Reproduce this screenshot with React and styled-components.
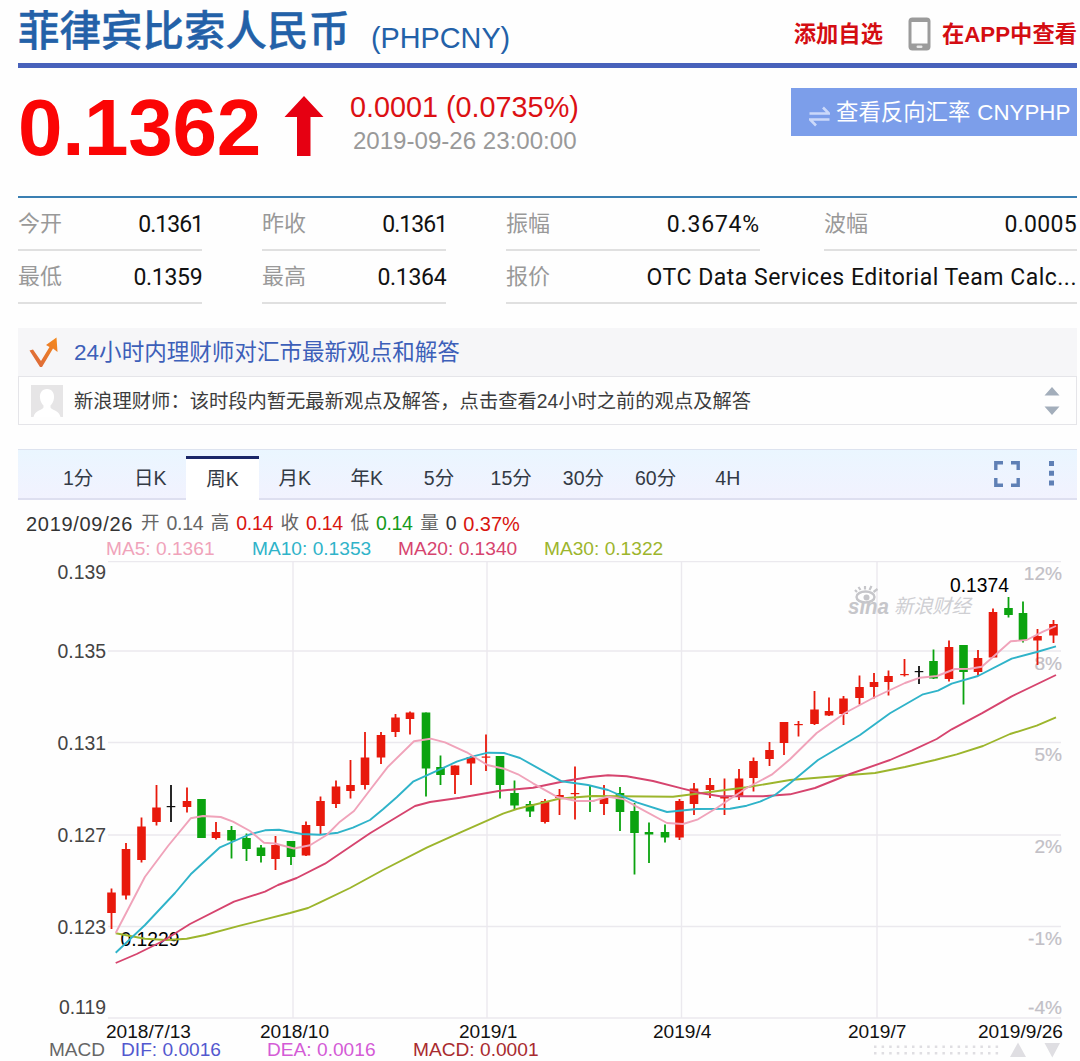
import React, { useState } from 'react';
import styled, { createGlobalStyle } from 'styled-components';


const RED = '#e8190c';
const GREEN = '#0ba30f';
const BLACK = '#111';

// x, high, low, body top, body bottom, colour
const candles = [
    [111.5, 888.5, 929, 892.5, 913, RED],
    [126, 843, 899.5, 849, 895.5, RED],
    [141.5, 817.5, 862.5, 826.5, 860, RED],
    [156.5, 785, 825.5, 807.5, 822, RED],
    [171, 785, 822, 806, 807, BLACK],
    [187, 787.5, 812.5, 801, 807, RED],
    [201.5, 799, 838, 799, 838, GREEN],
    [216, 822, 839.5, 832, 838, RED],
    [231.5, 826, 858.5, 830, 840.5, GREEN],
    [246.5, 833.5, 861, 838, 849, GREEN],
    [261, 845, 862.5, 847.5, 856, GREEN],
    [275.5, 836, 870, 845, 859, RED],
    [291, 841, 865, 841, 857, GREEN],
    [306, 821.5, 856, 825, 855.5, RED],
    [320.5, 796.5, 834, 801, 826, RED],
    [336, 780.5, 808, 786.5, 804, RED],
    [350.5, 760, 798.5, 785, 791, RED],
    [365, 732, 789.5, 757.5, 785, RED],
    [381, 732, 764, 735, 757.5, RED],
    [395.5, 714, 737, 717.5, 732, RED],
    [410, 711.5, 734.5, 712.5, 719, RED],
    [426, 712.5, 796.5, 712.5, 768.5, GREEN],
    [440.5, 755.5, 785, 767, 775, GREEN],
    [455, 765.5, 794, 765.5, 775, RED],
    [471, 756, 785, 757, 763.5, RED],
    [486, 734.5, 771, 756.5, 757.5, RED],
    [500, 756, 798.5, 756, 785, GREEN],
    [514.5, 780.5, 809.5, 793, 805.5, GREEN],
    [530, 801, 817, 804, 811.5, GREEN],
    [545, 799, 823.5, 801, 822, RED],
    [559.5, 789, 815, 795, 798, RED],
    [575, 766.5, 819.5, 793, 794, RED],
    [590, 785, 812, 800.5, 801.5, GREEN],
    [604, 785, 815, 798, 804, RED],
    [620, 787, 831, 793, 812, GREEN],
    [634.5, 803, 874.5, 811, 833, GREEN],
    [649, 822.5, 863, 832, 834.5, GREEN],
    [665, 824.5, 842.5, 832, 837.5, GREEN],
    [679.5, 799, 840, 801, 837.5, RED],
    [694, 783, 815, 788.5, 804, RED],
    [710, 778, 798, 785, 790, RED],
    [724.5, 778.5, 815, 797, 798.5, RED],
    [739, 769, 800, 778.5, 797, RED],
    [753.5, 757.5, 791.5, 761, 778, RED],
    [769.5, 742, 766, 750, 759, RED],
    [784, 722, 755, 722, 743, RED],
    [798.5, 721, 736.5, 724, 725, RED],
    [814.5, 691, 725, 709.5, 724, RED],
    [829, 697.5, 716, 711, 715.5, RED],
    [843.5, 696, 725, 698.5, 714, RED],
    [859.5, 675.5, 704.5, 687, 698, RED],
    [874, 673, 698.5, 682, 687, RED],
    [888.5, 670.5, 695.5, 676, 682, RED],
    [904.5, 659, 676.5, 674, 675, RED],
    [919, 666, 684, 671, 672, BLACK],
    [933.5, 649.5, 679, 661, 678.5, GREEN],
    [949, 640.5, 681.5, 647, 679, RED],
    [963.5, 645, 704.5, 645, 672, GREEN],
    [978, 650, 675.5, 658, 672, RED],
    [993, 608.5, 658, 612, 657.5, RED],
    [1008.5, 597, 617.5, 608, 615, GREEN],
    [1023, 601.5, 642.5, 613, 640, GREEN],
    [1037.5, 629, 665, 636, 640.5, RED],
    [1053.5, 620, 643, 624, 635.5, RED],
];

const averages = [
    {
        name: 'MA30: 0.1322', color: '#9cb52c',
        points: '115.7,933.3 145,938.7 166.7,940 186.7,938.7 205,935 240,925.7 290,913 308,908 320,902.3 350,888 383,870 426.7,847.7 460,832.7 503,813.7 516.7,809 533,805 560,798.5 593,796 673,796.7 710,792 746.7,787.3 790,780 850,775 875,773 905,767 935,760 956.7,754.3 983,746 1010,734 1036.7,725.7 1056,717.3',
    },
    {
        name: 'MA20: 0.1340', color: '#d6446e',
        points: '115.7,963 136.7,954 163,941 190,924 234,901.7 265,891.7 278,885 296.7,878 325,863.7 370,833.3 415,806 430,802 460,797.7 500,790.7 533,787.7 566.7,780.7 590,777 608,775.3 626.7,776.3 653,781 681.7,788.3 700,793 720,796.3 763,796.3 790,794.3 815,788 850,774 890,760 911.7,750.7 936.7,739 951.7,729.3 981.7,713.3 1011.7,696.3 1056,675',
    },
    {
        name: 'MA10: 0.1353', color: '#2fb3c9',
        points: '115.7,952.7 145,925 175,893 190.7,874.3 220,847.3 248,835 265,830.3 279,829.7 301.7,834 320,834.7 338,832.7 353,827.7 370,820 383,809.3 396.7,797.3 413,781.7 440,769.3 456.7,761.7 473,756.3 488,752.7 504,753 520,758 561.7,781.3 588,785 608,790 636.7,802.3 667,812 696.7,809 730,808.7 746.7,805.7 760,801.7 775,795 790,783.3 818,760 860,735 890,713.3 923,694.3 938,690.7 951.7,683.7 978,676 1011.7,658.7 1036.7,652 1056,646.3',
    },
    {
        name: 'MA5: 0.1361', color: '#f0a3ba',
        points: '115.7,933 145,876.7 168,846 190.7,818.3 203,816 220.7,817 233,821.7 250,831 264,842.7 275,843.5 294,848.5 310,845.3 326.7,835 340,821.7 354,811 370,790 388,766.7 414,741.3 430.7,738.7 445,742.3 466.7,752.3 487.3,765 504,768.7 518,774.3 533,783.3 558,797.3 576.7,801 593,801 608,796.7 623,799 636.7,806.7 667,823 683,824 698,819.3 716.7,808 730,799 746.7,788 771.7,774.7 790,759.3 816.7,733 845,713 873,698 905,683 920,677.7 937,676 955,669 970,668.7 981.7,666.7 993,657 1010.7,641.3 1026.7,640 1043,631.7 1056,626',
    },
];

const legend = [...averages].reverse();
const gridY = [561.5, 651, 742.5, 835, 926.5, 1018];
const gridX = [293, 487, 681.5, 877];
const prices = [['0.139', 573], ['0.135', 652], ['0.131', 744], ['0.127', 836], ['0.123', 928], ['0.119', 1008]];
const percents = [['12%', 574], ['8%', 664], ['5%', 755], ['2%', 847], ['-1%', 939], ['-4%', 1008]];
const dates = [['2018/7/13', 106], ['2018/10', 260], ['2019/1', 459], ['2019/4', 653], ['2019/7', 848], ['2019/9/26', 978]];
const tabs = ['1分', '日K', '周K', '月K', '年K', '5分', '15分', '30分', '60分', '4H'];
const quote = [['开', '0.14', '#666'], ['高', '0.14', '#d9150f'], ['收', '0.14', '#d9150f'], ['低', '0.14', '#159a1c'], ['量', '0', '#333']];


const Candle = ({ data }) => {
    const [x, high, low, top, bottom, color] = data;
    return (
        <g fill={color}>
            <rect x={x - 0.9} y={high} width="1.8" height={low - high} />
            <rect x={x - 4.3} y={top} width="8.6" height={Math.max(bottom - top, 1.2)} />
        </g>
    )
}

const Watermark = () => (
    <g fill="#c6c6ca">
        <text x="848" y="613.5" fontSize="22" fontWeight="700" fontStyle="italic" textLength="41" lengthAdjust="spacingAndGlyphs">sına</text>
        <ellipse cx="865.5" cy="597" rx="9" ry="5.5" fill="#fefefe" stroke="#c6c6ca" strokeWidth="2.4" />
        <circle cx="866.5" cy="597.5" r="3" />
        <path d="M857 592l-2-2M860.500 590l-2-3M865 589.500v-3.500M869.500 590l2-4M873.500 592l4-3" stroke="#c6c6ca" strokeWidth="2.2" fill="none" />
        <text x="894" y="612.5" fontSize="19.5" fontStyle="italic" textLength="77" fill="#cfcfd3">新浪财经</text>
    </g>
)

const Chart = () => (
    <ChartSvg viewBox="0 561 1080 480">
        <g stroke="#ebe9ee" strokeWidth="1.4">
            {gridY.map((y) => <line key={y} x1="108" x2="1061" y1={y} y2={y} />)}
            {gridX.map((x) => <line key={x} x1={x} x2={x} y1="561" y2="1018" />)}
        </g>
        <Watermark />
        <g fill="#444" fontSize="19.4" textAnchor="end">
            {prices.map(([label, y]) => <text key={label} x="106" y={y + 6}>{label}</text>)}
        </g>
        <g fill="#c2c0c6" stroke="#c2c0c6" strokeWidth="0.2" textAnchor="end">
            {percents.map(([label, y]) => <text key={label} x="1062" y={y + 5.7}>{label}</text>)}
        </g>
        <g fill="#111">
            {dates.map(([label, x]) => <text key={label} x={x} y="1038.3">{label}</text>)}
        </g>
        {candles.map((c) => <Candle key={c[0]} data={c} />)}
        <g fill="#000" fontSize="19.3">
            <text x="120.5" y="946.3">0.1229</text>
            <text x="950" y="591.8">0.1374</text>
        </g>
        {averages.map((a) => (
            <polyline key={a.name} points={a.points} fill="none" stroke={a.color} strokeWidth="1.9" strokeLinejoin="round" />
        ))}
    </ChartSvg>
)

const App = () => {

    const [active, setActive] = useState('周K');

    return (
        <Page>
            <GlobalStyle />
            <Header>
                <Title>菲律宾比索人民币</Title>
                <Code>(PHPCNY)</Code>
                <HeaderLinks>
                    <a>添加自选</a>
                    <svg width="23" height="34" viewBox="0 0 23 34">
                        <rect x="0.5" y="0.5" width="22" height="33" rx="4" fill="#9b9b9b" />
                        <rect x="3.5" y="5" width="16" height="21.5" fill="#fdfdfd" />
                        <rect x="8.5" y="28.5" width="6" height="2.4" rx="1.2" fill="#e8e8e8" />
                    </svg>
                    <a>在APP中查看</a>
                </HeaderLinks>
            </Header>

            <PriceRow>
                <Price>0.1362</Price>
                <UpArrow width="40" height="60" viewBox="0 0 40 60">
                    <path d="M20 0L39.5 21H26.5V60H13V21H0.5z" fill="#e60012" />
                </UpArrow>
                <Change>
                    <strong>0.0001 (0.0735%)</strong>
                    <span>2019-09-26 23:00:00</span>
                </Change>
                <ReverseButton>
                    <svg width="21" height="21" viewBox="0 0 21 21" fill="none" stroke="#cbd9fa" strokeWidth="2.6">
                        <path d="M0.5 7.500H20L14 1.500M20.500 13.500H1L7 19.500" />
                    </svg>
                    <span>查看反向汇率</span>
                    <em>CNYPHP</em>
                </ReverseButton>
            </PriceRow>

            <Stats>
                <Stat><span>今开</span><Value $spacing="-1px">0.1361</Value></Stat>
                <Stat><span>昨收</span><Value $spacing="-1px">0.1361</Value></Stat>
                <Stat $inset="4px"><span>振幅</span><Value $spacing="0.8px">0.3674%</Value></Stat>
                <Stat><span>波幅</span><Value $spacing="0.3px">0.0005</Value></Stat>
                <Stat><span>最低</span><Value $spacing="-0.3px">0.1359</Value></Stat>
                <Stat><span>最高</span><Value $spacing="-0.3px">0.1364</Value></Stat>
                <Stat $span={2}><span>报价</span><Value $spacing="0.5px">OTC Data Services Editorial Team Calc...</Value></Stat>
            </Stats>

            <Advice>
                <AdviceHead>
                    <svg width="30" height="30" viewBox="0 0 30 30">
                        <defs>
                            <linearGradient id="tick" x1="0" y1="1" x2="1" y2="0">
                                <stop offset="0" stopColor="#d9653f" />
                                <stop offset="1" stopColor="#f58a1d" />
                            </linearGradient>
                        </defs>
                        <path d="M0.500 13.500L4 12.500L12 24L20.500 10L17 8L27.500 0.500L28.500 15L24 11.500L13 30H11z" fill="url(#tick)" />
                    </svg>
                    <span>24小时内理财师对汇市最新观点和解答</span>
                </AdviceHead>
                <AdviceBody>
                    <svg width="32" height="32" viewBox="0 0 32 32">
                        <rect width="32" height="32" fill="#e6e5e6" />
                        <path d="M16 4c-5 0-7.500 4-7 9 .3 3.500 2 6 3.500 7.500v2C11 25.500 4 25 2.500 32h27C28 25 21 25.500 19.500 22.500v-2C21 19 22.700 16.500 23 13c.5-5-2-9-7-9z" fill="#fff" />
                    </svg>
                    <span>新浪理财师：该时段内暂无最新观点及解答，点击查看24小时之前的观点及解答</span>
                    <Spinner width="16" height="28" viewBox="0 0 16 28" fill="#a3aebb">
                        <path d="M8 0L15.500 8.500H0.500zM8 28L15.500 19.500H0.500z" />
                    </Spinner>
                </AdviceBody>
            </Advice>

            <TabBar>
                {tabs.map((t) => (
                    <Tab key={t} $active={t === active} onClick={() => setActive(t)}>{t}</Tab>
                ))}
                <Tools width="62" height="26" viewBox="0 0 62 26">
                    <path d="M1.800 9V1.800H9M17 1.800H24.200V9M24.200 17V24.200H17M9 24.200H1.800V17" fill="none" stroke="#5f80b5" strokeWidth="3.400" />
                    <path d="M55 0h5v5h-5zM55 9.700h5v5h-5zM55 19.400h5v5h-5z" fill="#5f80b5" />
                </Tools>
            </TabBar>

            <QuoteLine>
                <time>2019/09/26</time>
                {quote.map(([label, value, color]) => (
                    <Quote key={label} $color={color} $short={value === '0'}>
                        <span>{label}</span>
                        <b>{value}</b>
                    </Quote>
                ))}
                <Percent>0.37%</Percent>
            </QuoteLine>
            <Legend>
                {legend.map((a) => <LegendItem key={a.name} $color={a.color}>{a.name}</LegendItem>)}
            </Legend>

            <Chart />

            <MacdRow>
                <MacdName>MACD</MacdName>
                <LegendItem $color="#5358cf">DIF: 0.0016</LegendItem>
                <LegendItem $color="#d45bd6">DEA: 0.0016</LegendItem>
                <LegendItem $color="#a92b2e">MACD: 0.0001</LegendItem>
                <Handles width="188" height="16" viewBox="0 0 188 16" fill="#dfdee2">
                    {Array.from({ length: 17 }, (_, i) => (
                        <path key={i} d={`M${1 + i * 7.6} 3.500h2.500v2.500h-2.500zM${1 + i * 7.6} 10h2.500v2.500h-2.500z`} />
                    ))}
                    <path d="M145 0.500L153 15H137zM171.500 1H187L179.300 15.500z" />
                </Handles>
            </MacdRow>
        </Page>
    )
}

export default App;

const GlobalStyle = createGlobalStyle`
    body{
        margin: 0;
        background-color: #fefefe;
        font-family: 'Liberation Sans', 'Noto Sans CJK SC', sans-serif;
        overflow: hidden;
    }
`

const Page = styled.div`
    width: 1080px;
    height: 1061px;
    box-sizing: border-box;
    overflow: hidden;
    display: flex;
    flex-direction: column;
    line-height: 1;

    svg{
        flex-shrink: 0;
    }
`

const Header = styled.header`
    display: flex;
    align-items: flex-start;
    height: 63px;
    margin: 0 3px 0 18px;
    border-bottom: 5px solid #4862bb;
`

const Title = styled.h1`
    margin: 7px 0 0;
    font-size: 41.5px;
    line-height: 42px;
    font-weight: 500;
    font-family: 'Noto Sans CJK SC', sans-serif;
    -webkit-text-stroke: 0.4px #2361a8;
    color: #2361a8;
`

const Code = styled.span`
    margin: 23px 0 0 21px;
    font-size: 28.8px;
    line-height: 30px;
    color: #2361a8;
`

const HeaderLinks = styled.div`
    display: flex;
    align-items: center;
    margin: 17px 0 0 auto;
    height: 34px;
    font-size: 22.3px;
    font-weight: 700;
    color: #d40d12;

    a{
        padding-top: 2px;
    }

    svg{
        margin: 0 11px 0 25px;
    }
`

const PriceRow = styled.section`
    display: flex;
    align-items: flex-start;
    height: 128px;
    margin: 0 3px 0 18px;
    border-bottom: 2px solid #3a7fb2;
`

const Price = styled.div`
    margin-top: 20px;
    font-size: 80px;
    line-height: 80px;
    font-weight: 700;
    letter-spacing: -0.3px;
    color: #fb0505;
`

const UpArrow = styled.svg`
    margin: 28px 0 0 23px;
`

const Change = styled.div`
    display: flex;
    flex-direction: column;
    margin: 24px 0 0 26px;

    strong{
        font-size: 28.8px;
        line-height: 30px;
        font-weight: 400;
        color: #dc1013;
    }

    span{
        margin: 5px 0 0 3px;
        font-size: 24.1px;
        line-height: 28px;
        color: #999;
    }
`

const ReverseButton = styled.button`
    display: flex;
    align-items: center;
    width: 286px;
    height: 48px;
    margin: 20px 0 0 auto;
    padding: 2px 0 0 18px;
    border: none;
    background-color: #7c9eea;
    color: #fff;
    font: 22.4px/1 'Liberation Sans', 'Noto Sans CJK SC', sans-serif;

    svg{
        margin: 7px 6px 0 0;
    }

    em{
        margin-left: 7px;
        font-size: 22.3px;
        font-style: normal;
    }
`

const Stats = styled.section`
    display: grid;
    grid-template-columns: 184px 184px 258px 253px;
    column-gap: 60px;
    margin: 0 3px 0 18px;
`

const Stat = styled.div`
    display: flex;
    align-items: center;
    justify-content: space-between;
    box-sizing: border-box;
    height: 53px;
    margin-right: ${({ $inset }) => $inset || 0};
    padding-top: 1px;
    border-bottom: 2px solid #e0e0e0;
    grid-column: span ${({ $span }) => $span || 1};

    span{
        font-size: 22px;
        color: #999;
    }
`

const Value = styled.b`
    margin-right: ${({ $spacing }) => ($spacing[0] === '-' ? $spacing : 0)};
    font-family: Roboto, sans-serif;
    font-size: 23px;
    font-weight: 400;
    letter-spacing: ${({ $spacing }) => $spacing};
    color: #111;
`

const Advice = styled.section`
    margin: 24px 3px 0 18px;
`

const AdviceHead = styled.div`
    display: flex;
    align-items: center;
    height: 48px;
    padding-left: 11px;
    background-color: #f6f6f8;
    font-size: 22.55px;
    color: #3d5fb9;

    svg{
        margin-right: 15px;
    }

    span{
        padding-top: 2px;
    }
`

const AdviceBody = styled.div`
    display: flex;
    align-items: center;
    box-sizing: border-box;
    height: 49px;
    padding: 0 16px 0 12px;
    border: 1px solid #e5e5e9;
    font-size: 19.3px;
    color: #3c3c3c;

    span{
        margin-left: 11px;
        padding-top: 2px;
        white-space: nowrap;
    }
`

const Spinner = styled.svg`
    margin-left: auto;
`

const TabBar = styled.nav`
    display: flex;
    align-items: flex-end;
    box-sizing: border-box;
    height: 51px;
    margin: 24px 3px 0 18px;
    padding-left: 24px;
    border-top: 1.5px solid #dde3ef;
    box-shadow: inset 0 -2px 0 #dedff0;
    background: linear-gradient(#eaf6ff, #f2f2fe);
`

const Tab = styled.div`
    display: flex;
    align-items: center;
    justify-content: center;
    box-sizing: border-box;
    width: 72.2px;
    height: 44px;
    padding-bottom: ${({ $active }) => ($active ? '0' : '1px')};
    border-top: 3px solid ${({ $active }) => ($active ? '#1a2768' : 'transparent')};
    background-color: ${({ $active }) => ($active ? '#fff' : 'transparent')};
    font-size: 19.5px;
    color: #333a45;
    cursor: pointer;
`

const Tools = styled.svg`
    align-self: flex-start;
    margin: 11px 21px 0 auto;
`

const QuoteLine = styled.div`
    display: flex;
    align-items: center;
    height: 44px;
    padding: 3px 0 0 26px;
    box-sizing: border-box;
    font-size: 19.5px;

    time{
        width: 115px;
        font-size: 20px;
        letter-spacing: 0.7px;
        color: #333;
    }
`

const Quote = styled.div`
    display: flex;
    align-items: center;
    width: ${({ $short }) => ($short ? '43px' : '69.8px')};

    span{
        width: 25.5px;
        font-size: 18.5px;
        color: #666;
    }

    b{
        font-weight: 400;
        letter-spacing: -0.3px;
        color: ${({ $color }) => $color};
    }
`

const Percent = styled.span`
    font-size: 20px;
    color: #d9150f;
`

const Legend = styled.div`
    display: flex;
    height: 17px;
    padding-left: 106px;
    margin-top: -5px;
    margin-bottom: 5px;
`

const LegendItem = styled.span`
    width: 146px;
    font-size: 19.15px;
    line-height: 19px;
    color: ${({ $color }) => $color};
`

const ChartSvg = styled.svg`
    width: 1080px;
    height: 480px;
    font-size: 19.1px;
`

const MacdRow = styled.div`
    display: flex;
    height: 20px;
    margin-top: -1px;
    padding-left: 49px;
`

const MacdName = styled.span`
    width: 72px;
    font-size: 19px;
    line-height: 19px;
    color: #666;
`

const Handles = styled.svg`
    margin: 2px 19px 0 auto;
`
